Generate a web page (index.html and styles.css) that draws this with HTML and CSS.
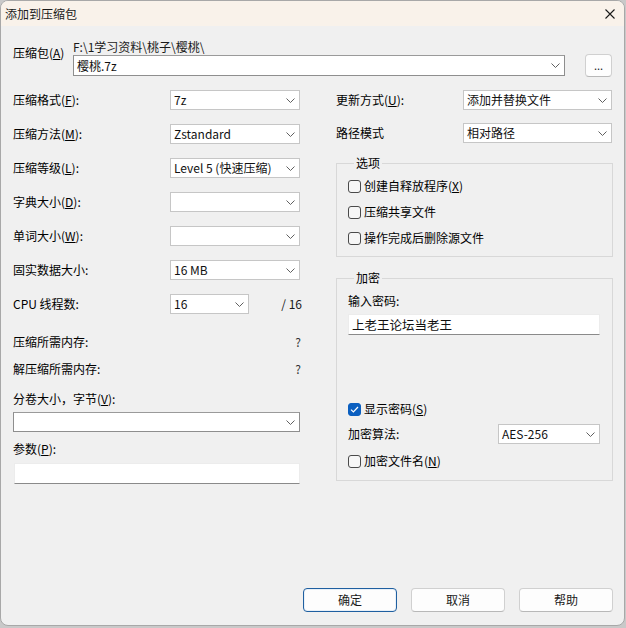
FILE: index.html
```html
<!DOCTYPE html>
<html lang="zh-CN">
<head>
<meta charset="utf-8">
<title>添加到压缩包</title>
<link rel="stylesheet" href="styles.css">
</head>
<body>
<div class="window">
  <div class="titlebar">
    <span class="title">添加到压缩包</span>
    <svg class="close" width="10" height="10" viewBox="0 0 10 10"><path d="M0.5 0.5 L9.5 9.5 M9.5 0.5 L0.5 9.5" stroke="#1a1a1a" stroke-width="1.1" fill="none"/></svg>
  </div>
  <div class="content">
    <div class="archive">
      <div class="archive-label">压缩包(<u>A</u>)</div>
      <div class="archive-main">
        <div class="path">F:\1学习资料\桃子\樱桃\</div>
        <div class="combo edit wide">
          <span class="val">樱桃.7z</span>
          <svg class="chev" width="9" height="5" viewBox="0 0 9 5"><path d="M0.5 0.5 L4.5 4.5 L8.5 0.5" stroke="#606060" fill="none"/></svg>
        </div>
      </div>
      <div class="btn browse">...</div>
    </div>

    <div class="columns">
      <div class="left">
        <div class="grid">
          <div class="lbl">压缩格式(<u>F</u>):</div>
          <div class="combo"><span class="val">7z</span><svg class="chev" width="9" height="5" viewBox="0 0 9 5"><path d="M0.5 0.5 L4.5 4.5 L8.5 0.5" stroke="#606060" fill="none"/></svg></div>
          <div class="lbl">压缩方法(<u>M</u>):</div>
          <div class="combo"><span class="val">Zstandard</span><svg class="chev" width="9" height="5" viewBox="0 0 9 5"><path d="M0.5 0.5 L4.5 4.5 L8.5 0.5" stroke="#606060" fill="none"/></svg></div>
          <div class="lbl">压缩等级(<u>L</u>):</div>
          <div class="combo"><span class="val">Level 5 (快速压缩)</span><svg class="chev" width="9" height="5" viewBox="0 0 9 5"><path d="M0.5 0.5 L4.5 4.5 L8.5 0.5" stroke="#606060" fill="none"/></svg></div>
          <div class="lbl">字典大小(<u>D</u>):</div>
          <div class="combo"><span class="val"></span><svg class="chev" width="9" height="5" viewBox="0 0 9 5"><path d="M0.5 0.5 L4.5 4.5 L8.5 0.5" stroke="#606060" fill="none"/></svg></div>
          <div class="lbl">单词大小(<u>W</u>):</div>
          <div class="combo"><span class="val"></span><svg class="chev" width="9" height="5" viewBox="0 0 9 5"><path d="M0.5 0.5 L4.5 4.5 L8.5 0.5" stroke="#606060" fill="none"/></svg></div>
          <div class="lbl">固实数据大小:</div>
          <div class="combo"><span class="val">16 MB</span><svg class="chev" width="9" height="5" viewBox="0 0 9 5"><path d="M0.5 0.5 L4.5 4.5 L8.5 0.5" stroke="#606060" fill="none"/></svg></div>
          <div class="lbl">CPU 线程数:</div>
          <div class="cpu">
            <div class="combo small"><span class="val">16</span><svg class="chev" width="9" height="5" viewBox="0 0 9 5"><path d="M0.5 0.5 L4.5 4.5 L8.5 0.5" stroke="#606060" fill="none"/></svg></div>
            <span class="total">/ 16</span>
          </div>
        </div>
        <div class="mem first"><span>压缩所需内存:</span><span class="q">?</span></div>
        <div class="mem second"><span>解压缩所需内存:</span><span class="q">?</span></div>
        <div class="lbl split-lbl">分卷大小，字节(<u>V</u>):</div>
        <div class="combo edit full"><span class="val"></span><svg class="chev" width="9" height="5" viewBox="0 0 9 5"><path d="M0.5 0.5 L4.5 4.5 L8.5 0.5" stroke="#606060" fill="none"/></svg></div>
        <div class="lbl param-lbl">参数(<u>P</u>):</div>
        <div class="textbox param"></div>
      </div>

      <div class="right">
        <div class="rrow">
          <div class="lbl">更新方式(<u>U</u>):</div>
          <div class="combo rcombo"><span class="val">添加并替换文件</span><svg class="chev" width="9" height="5" viewBox="0 0 9 5"><path d="M0.5 0.5 L4.5 4.5 L8.5 0.5" stroke="#606060" fill="none"/></svg></div>
        </div>
        <div class="rrow second">
          <div class="lbl">路径模式</div>
          <div class="combo rcombo"><span class="val">相对路径</span><svg class="chev" width="9" height="5" viewBox="0 0 9 5"><path d="M0.5 0.5 L4.5 4.5 L8.5 0.5" stroke="#606060" fill="none"/></svg></div>
        </div>

        <fieldset class="group options">
          <legend>选项</legend>
          <div class="check"><span class="box"></span><span>创建自释放程序(<u>X</u>)</span></div>
          <div class="check"><span class="box"></span><span>压缩共享文件</span></div>
          <div class="check"><span class="box"></span><span>操作完成后删除源文件</span></div>
        </fieldset>

        <fieldset class="group enc">
          <legend>加密</legend>
          <div class="lbl pw-lbl">输入密码:</div>
          <div class="textbox pw">上老王论坛当老王</div>
          <div class="check show"><span class="box on"><svg width="9" height="7" viewBox="0 0 9 7"><path d="M1 3.6 L3.4 6 L8 1" stroke="#fff" stroke-width="1.2" fill="none"/></svg></span><span>显示密码(<u>S</u>)</span></div>
          <div class="algo">
            <div class="lbl">加密算法:</div>
            <div class="combo acombo"><span class="val">AES-256</span><svg class="chev" width="9" height="5" viewBox="0 0 9 5"><path d="M0.5 0.5 L4.5 4.5 L8.5 0.5" stroke="#606060" fill="none"/></svg></div>
          </div>
          <div class="check encname"><span class="box"></span><span>加密文件名(<u>N</u>)</span></div>
        </fieldset>
      </div>
    </div>
  </div>
  <div class="footer">
    <div class="btn primary">确定</div>
    <div class="btn">取消</div>
    <div class="btn">帮助</div>
  </div>
</div>
</body>
</html>
```

FILE: styles.css
```css
html, body {
  margin: 0;
  padding: 0;
}
body {
  width: 626px;
  height: 628px;
  background: #c9c9c9;
  font-family: "Noto Sans CJK SC", "Noto Sans", sans-serif;
  font-size: 12px;
  color: #000;
}
u {
  text-decoration: underline;
  text-underline-offset: 1px;
}
.window {
  box-sizing: border-box;
  width: 625px;
  height: 626px;
  border: 1px solid #a8a8a8;
  border-radius: 8px;
  background: #f0f0f0;
  overflow: hidden;
  display: flex;
  flex-direction: column;
}
.titlebar {
  height: 25px;
  flex: none;
  background: #f9f2ea;
  display: flex;
  align-items: center;
  justify-content: space-between;
  padding: 0 9px 0 4px;
}
.title {
  line-height: 16px;
  color: #1a1a1a;
}
.close {
  display: block;
  margin-top: 1px;
}
.content {
  flex: 1;
  padding: 0 11px 0 12px;
}
.lbl {
  line-height: 16px;
  white-space: nowrap;
}
/* archive row */
.archive {
  display: flex;
  margin-top: 13px;
}
.archive-label {
  width: 60px;
  flex: none;
  padding-top: 6px;
  line-height: 16px;
}
.archive-main {
  width: 492px;
  flex: none;
}
.path {
  line-height: 15px;
  color: #1a1a1a;
}
.combo {
  box-sizing: border-box;
  height: 20px;
  background: #fff;
  border: 1px solid #c6c6c6;
  display: flex;
  align-items: center;
  justify-content: space-between;
  padding: 0 4px 0 3px;
  line-height: 16px;
  color: #111;
  font-family: "Noto Sans", "Noto Sans CJK SC", sans-serif;
}
.combo .val {
  font-family: "Noto Sans CJK SC", "Noto Sans", sans-serif;
  white-space: nowrap;
}
.chev {
  display: block;
  flex: none;
}
.combo.edit {
  border-color: #8e8e8e;
  border-top-color: #9a9a9a;
}
.combo.wide {
  margin-top: 1px;
  height: 21px;
}
.btn {
  box-sizing: border-box;
  height: 24px;
  background: #fdfdfd;
  border: 1px solid #d0d0d0;
  border-bottom-color: #b8b8b8;
  border-radius: 4px;
  display: flex;
  align-items: center;
  justify-content: center;
  color: #1a1a1a;
  line-height: 16px;
}
.browse {
  width: 27px;
  height: 23px;
  margin-left: 20px;
  align-self: flex-end;
  margin-bottom: -1px;
  font-size: 11px;
  padding-bottom: 2px;
}
/* columns */
.columns {
  display: flex;
  margin-top: 14px;
  gap: 36px;
}
.left {
  width: 287px;
  flex: none;
}
.grid {
  display: grid;
  grid-template-columns: 157px 130px;
  grid-auto-rows: 20px;
  row-gap: 14px;
  align-items: center;
}
.cpu {
  display: flex;
  align-items: center;
  justify-content: space-between;
}
.combo.small {
  width: 79px;
}
.total {
  line-height: 16px;
  margin-right: -2px;
  color: #1a1a1a;
}
.mem {
  display: flex;
  justify-content: space-between;
  line-height: 16px;
}
.mem.first {
  margin-top: 20px;
}
.mem.second {
  margin-top: 11px;
}
.q {
  margin-right: -1px;
  color: #333;
}
.split-lbl {
  margin-top: 14px;
}
.combo.full {
  margin-top: 5px;
  width: 287px;
}
.param-lbl {
  margin-top: 9px;
}
.textbox {
  box-sizing: border-box;
  height: 21px;
  background: #fff;
  border: 1px solid #ececec;
  border-bottom: 1px solid #8a8a8a;
  line-height: 18px;
  padding: 0 3px;
  color: #111;
}
.param {
  margin-top: 6px;
  margin-left: 1px;
  width: 286px;
}
/* right column */
.right {
  width: 277px;
  flex: none;
}
.rrow {
  display: flex;
  align-items: center;
  justify-content: space-between;
  height: 20px;
}
.rrow.second {
  margin-top: 13px;
}
.rcombo {
  width: 149px;
  margin-right: 1px;
}
.group {
  margin: 0;
  padding: 0 12px 0 11px;
  border: 1px solid #d8d8d8;
  min-width: 0;
}
.group legend {
  padding: 0 2px;
  margin-left: 6px;
  line-height: 16px;
}
.options {
  margin-top: 12px;
  padding-top: 7px;
  padding-bottom: 10px;
}
.check {
  display: flex;
  align-items: center;
  gap: 3px;
  line-height: 16px;
  white-space: nowrap;
}
.check + .check {
  margin-top: 10px;
}
.box {
  box-sizing: border-box;
  width: 13px;
  height: 13px;
  border: 1px solid #4a4a4a;
  border-radius: 3px;
  background: #f6f6f6;
  flex: none;
  display: flex;
  align-items: center;
  justify-content: center;
}
.box.on {
  background: #0a5fc0;
  border-color: #0a5fc0;
}
.box.on svg {
  display: block;
}
.enc {
  margin-top: 13px;
  padding-top: 7px;
  padding-bottom: 11px;
}
.pw {
  margin-top: 5px;
  width: 252px;
  line-height: 19px;
  font-size: 12.5px;
}
.check.show {
  margin-top: 66px;
}
.algo {
  display: flex;
  align-items: center;
  justify-content: space-between;
  height: 20px;
  margin-top: 7px;
}
.acombo {
  width: 102px;
}
.check.encname {
  margin-top: 9px;
}
/* footer */
.footer {
  display: flex;
  justify-content: flex-end;
  gap: 14px;
  padding: 0 11px 13px 0;
}
.footer .btn {
  width: 94px;
}
.btn.primary {
  border: 1px solid #1f5fa0;
  box-shadow: inset 0 0 0 1px #e8f0f8;
}
```
